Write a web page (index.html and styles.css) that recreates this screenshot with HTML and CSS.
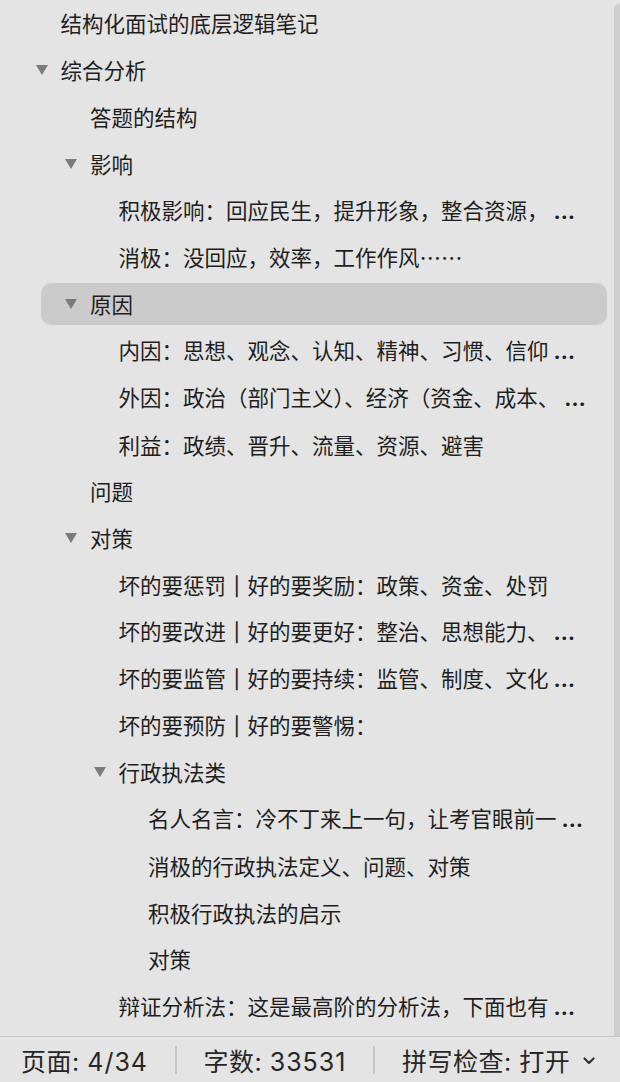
FILE: index.html
```html
<!DOCTYPE html>
<html lang="zh-CN">
<head>
<meta charset="utf-8">
<title>结构化面试的底层逻辑笔记</title>
<link rel="stylesheet" href="styles.css">
</head>
<body>
<div class="app">
  <div class="main">
    <div class="outline">
      <div class="row"><div class="item l0"><span class="txt">结构化面试的底层逻辑笔记</span></div></div>
      <div class="row"><div class="item l0"><svg class="tog" viewBox="0 0 12 10"><polygon points="0,0 12,0 6,10"/></svg><span class="txt">综合分析</span></div></div>
      <div class="row"><div class="item l1"><span class="txt">答题的结构</span></div></div>
      <div class="row"><div class="item l1"><svg class="tog" viewBox="0 0 12 10"><polygon points="0,0 12,0 6,10"/></svg><span class="txt">影响</span></div></div>
      <div class="row"><div class="item l2"><span class="txt">积极影响：回应民生，提升形象，整合资源，<span class="ell">…</span></span></div></div>
      <div class="row"><div class="item l2"><span class="txt">消极：没回应，效率，工作作风……</span></div></div>
      <div class="row"><div class="item l1 sel"><svg class="tog" viewBox="0 0 12 10"><polygon points="0,0 12,0 6,10"/></svg><span class="txt">原因</span></div></div>
      <div class="row"><div class="item l2"><span class="txt">内因：思想、观念、认知、精神、习惯、信仰<span class="ell">…</span></span></div></div>
      <div class="row"><div class="item l2"><span class="txt">外因：政治（部门主义）、经济（资金、成本、<span class="ell">…</span></span></div></div>
      <div class="row"><div class="item l2"><span class="txt">利益：政绩、晋升、流量、资源、避害</span></div></div>
      <div class="row"><div class="item l1"><span class="txt">问题</span></div></div>
      <div class="row"><div class="item l1"><svg class="tog" viewBox="0 0 12 10"><polygon points="0,0 12,0 6,10"/></svg><span class="txt">对策</span></div></div>
      <div class="row"><div class="item l2"><span class="txt">坏的要惩罚<span class="bar">｜</span>好的要奖励：政策、资金、处罚</span></div></div>
      <div class="row"><div class="item l2"><span class="txt">坏的要改进<span class="bar">｜</span>好的要更好：整治、思想能力、<span class="ell">…</span></span></div></div>
      <div class="row"><div class="item l2"><span class="txt">坏的要监管<span class="bar">｜</span>好的要持续：监管、制度、文化<span class="ell">…</span></span></div></div>
      <div class="row"><div class="item l2"><span class="txt">坏的要预防<span class="bar">｜</span>好的要警惕：</span></div></div>
      <div class="row"><div class="item l2"><svg class="tog" viewBox="0 0 12 10"><polygon points="0,0 12,0 6,10"/></svg><span class="txt">行政执法类</span></div></div>
      <div class="row"><div class="item l3"><span class="txt">名人名言：冷不丁来上一句，让考官眼前一<span class="ell">…</span></span></div></div>
      <div class="row"><div class="item l3"><span class="txt">消极的行政执法定义、问题、对策</span></div></div>
      <div class="row"><div class="item l3"><span class="txt">积极行政执法的启示</span></div></div>
      <div class="row"><div class="item l3"><span class="txt">对策</span></div></div>
      <div class="row"><div class="item l2"><span class="txt">辩证分析法：这是最高阶的分析法，下面也有<span class="ell">…</span></span></div></div>
    </div>
    <div class="edge"></div>
  </div>
  <div class="status">
    <span class="stat">页面: <span class="num">4/34</span></span>
    <span class="sep"></span>
    <span class="stat">字数: <span class="num">33531</span></span>
    <span class="sep"></span>
    <span class="stat">拼写检查: 打开</span>
    <svg class="chev" viewBox="0 0 12 8"><path d="M1.5 1.5 L6 6 L10.5 1.5"/></svg>
  </div>
</div>
</body>
</html>
```
FILE: styles.css
```css
html, body {
  margin: 0;
  padding: 0;
  background: #e4e4e4;
}

.app {
  width: 620px;
  height: 1082px;
  display: flex;
  flex-direction: column;
  overflow: hidden;
  color: #1e1e1e;
  font-family: "Noto Sans CJK SC", "Noto Sans", sans-serif;
}

.main {
  flex: 1;
  display: flex;
  min-height: 0;
}

.outline {
  flex: 1;
  display: flex;
  flex-direction: column;
}

.edge {
  width: 6px;
  margin-top: 3px;
  background: #cecece;
  border-top-left-radius: 6px;
}

.row {
  height: 46.8px;
  flex: none;
  display: flex;
  align-items: center;
}

.item {
  margin-left: 41px;
  width: 566px;
  height: 42px;
  box-sizing: border-box;
  border-radius: 10px;
  display: flex;
  align-items: center;
  font-size: 21.5px;
  line-height: 42px;
  white-space: nowrap;
}

.item.sel {
  background: #cbcbcb;
}

.l0 { padding-left: 19.5px; }
.l1 { padding-left: 49px; }
.l2 { padding-left: 77.5px; }
.l3 { padding-left: 107px; }

.tog {
  flex: none;
  width: 12px;
  height: 10px;
  margin-left: -25px;
  margin-right: 13px;
  fill: #7b7b7b;
}

.bar {
  color: #1e1e1e;
  -webkit-text-stroke: 0.7px #1e1e1e;
}

.ell {
  font-family: "Inter", "Liberation Sans", sans-serif;
  font-weight: 700;
  margin-left: 5px;
  letter-spacing: 1px;
}

.status {
  height: 45px;
  flex: none;
  border-top: 1.5px solid #c8c8c8;
  display: flex;
  align-items: center;
  padding-left: 21px;
  gap: 27px;
  font-family: "Inter", "Noto Sans CJK SC", sans-serif;
  font-size: 25px;
  letter-spacing: 0.5px;
  color: #262626;
}

.stat {
  white-space: nowrap;
}

.num {
  letter-spacing: 1px;
}

.sep {
  width: 1.5px;
  height: 28px;
  background: #c6c6c6;
}

.chev {
  width: 12px;
  height: 8px;
  margin-left: -14px;
  margin-top: 3px;
  fill: none;
  stroke: #333;
  stroke-width: 2.2;
  stroke-linecap: round;
  stroke-linejoin: round;
}
```
